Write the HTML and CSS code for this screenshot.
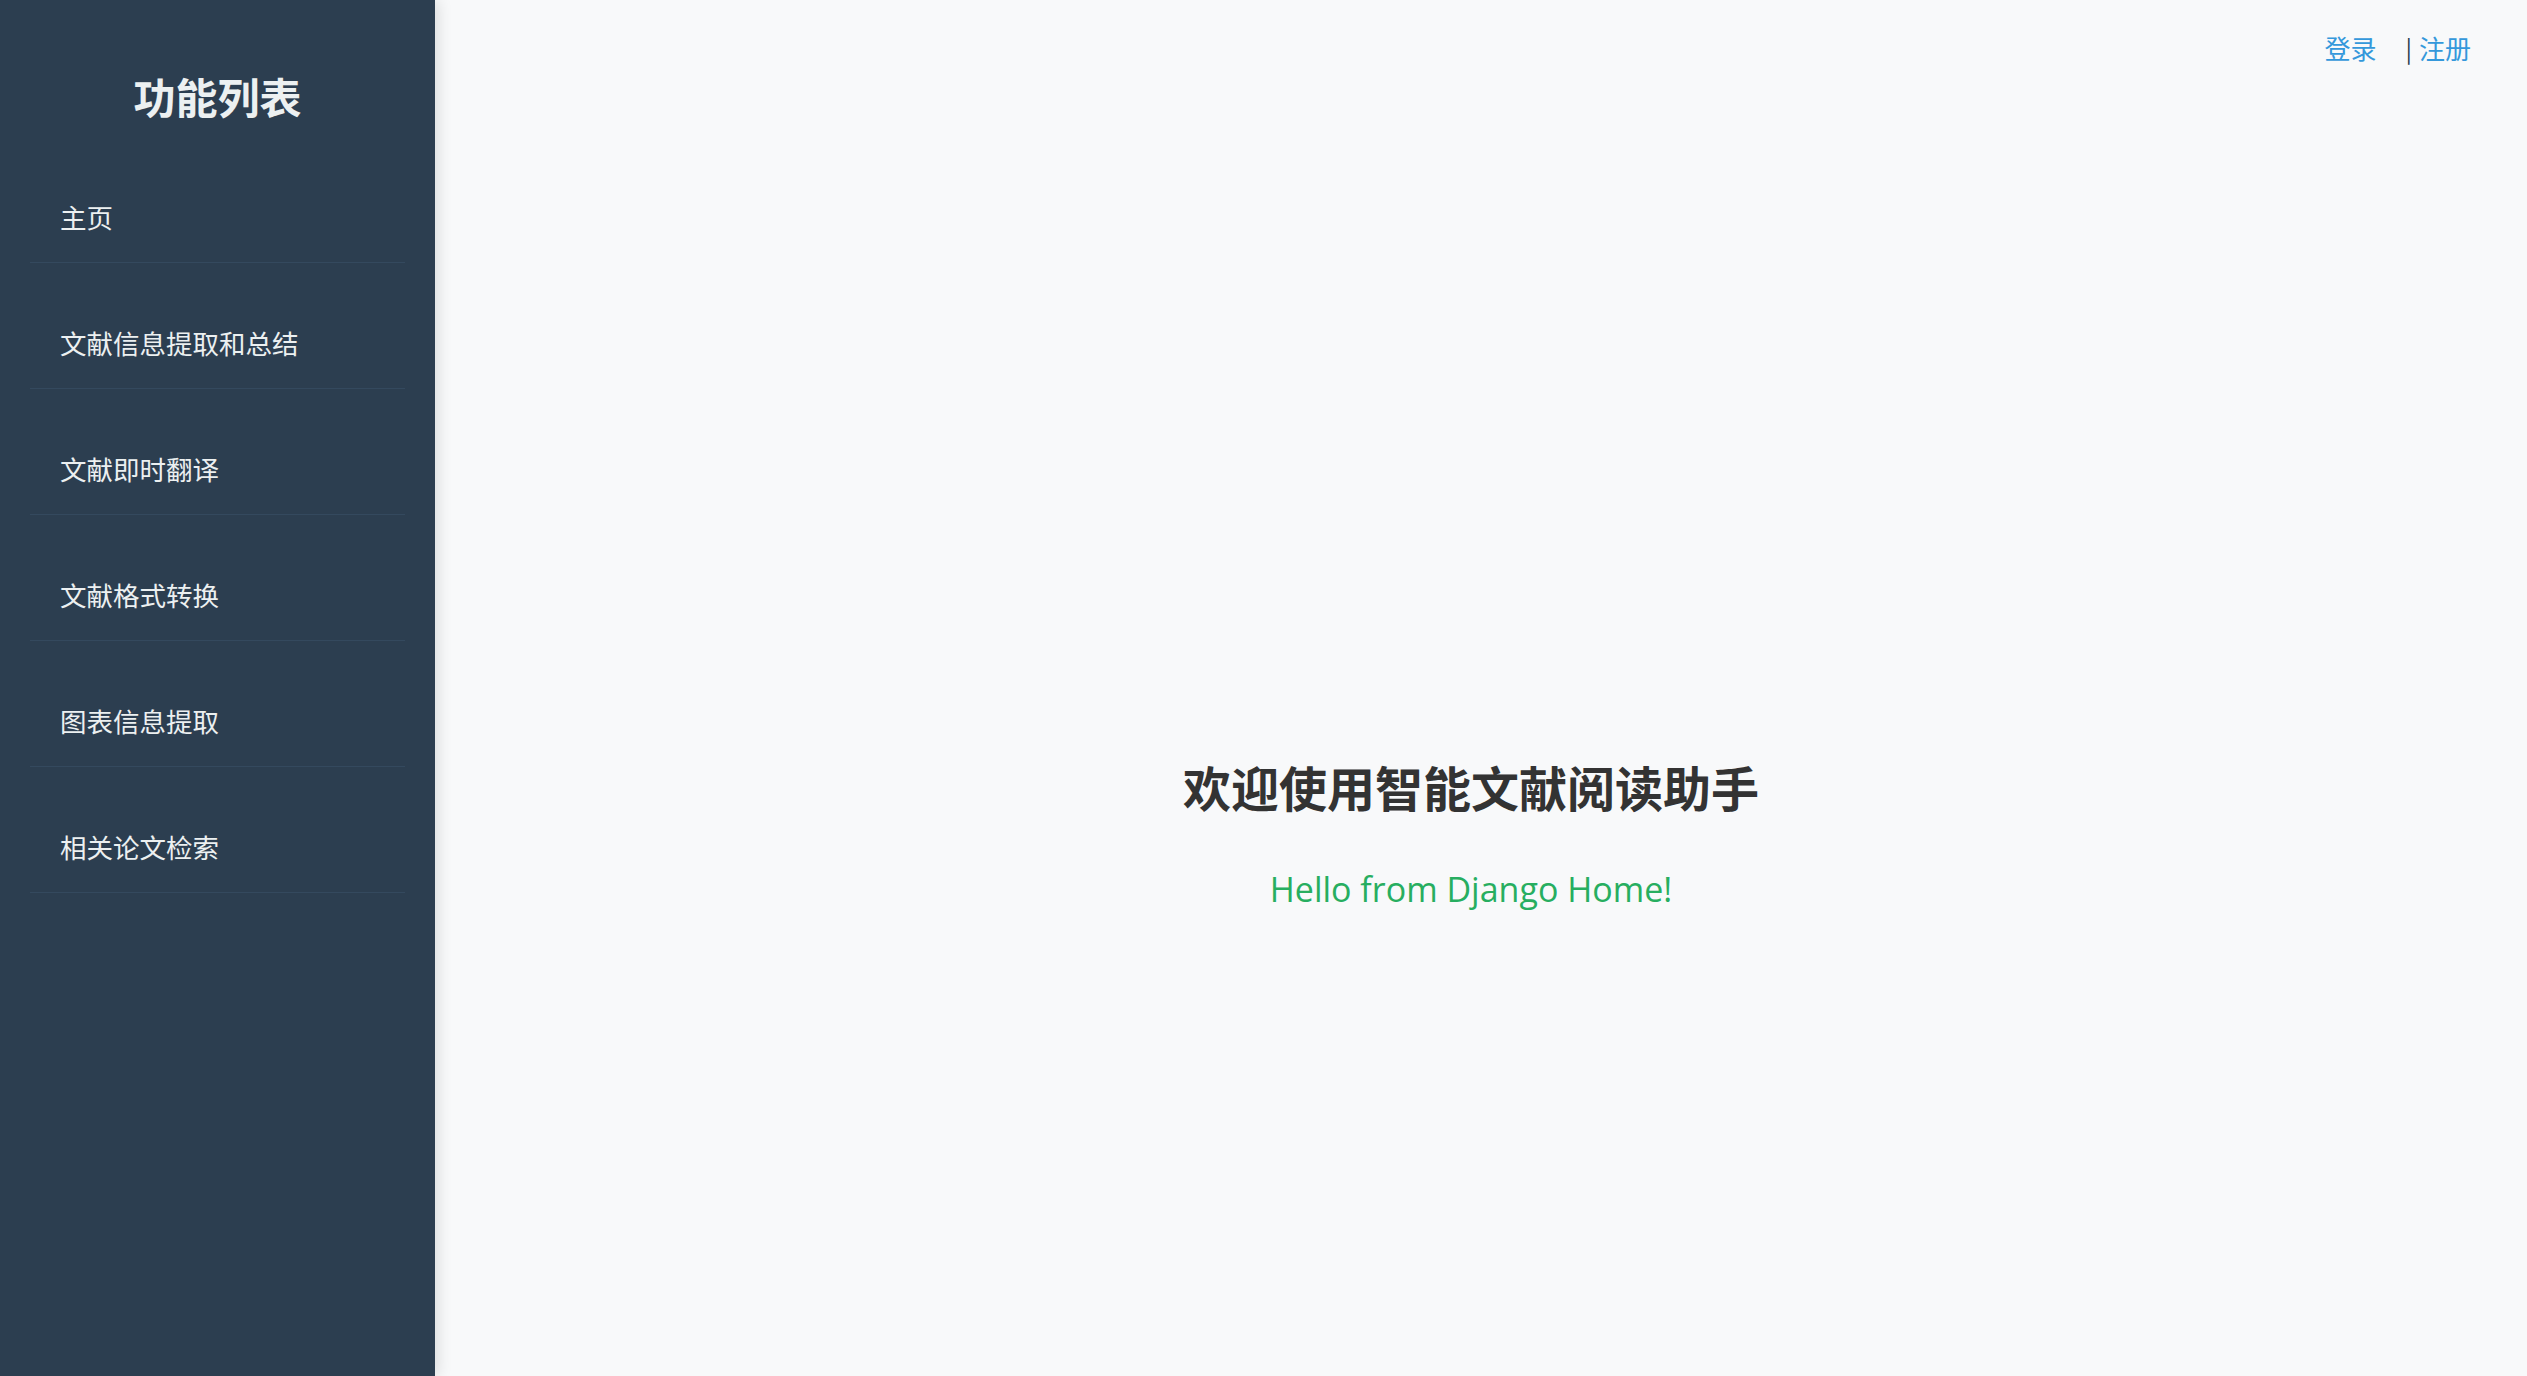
FILE: index.html
```html
<!DOCTYPE html>
<html lang="zh-CN">
<head>
<meta charset="utf-8">
<title>智能文献阅读助手</title>
<link rel="stylesheet" href="styles.css">
</head>
<body>
  <aside class="sidebar">
    <h2 class="sidebar-title">功能列表</h2>
    <ul class="menu">
      <li class="menu-item"><a href="#">主页</a></li>
      <li class="menu-item"><a href="#">文献信息提取和总结</a></li>
      <li class="menu-item"><a href="#">文献即时翻译</a></li>
      <li class="menu-item"><a href="#">文献格式转换</a></li>
      <li class="menu-item"><a href="#">图表信息提取</a></li>
      <li class="menu-item"><a href="#">相关论文检索</a></li>
    </ul>
  </aside>
  <main class="main">
    <header class="auth">
      <a class="auth-link" href="#">登录</a>
      <span class="auth-sep">|</span>
      <a class="auth-link" href="#">注册</a>
    </header>
    <section class="content">
      <h1 class="welcome">欢迎使用智能文献阅读助手</h1>
      <p class="hello">Hello from Django Home!</p>
    </section>
  </main>
</body>
</html>
```

FILE: styles.css
```css
html, body {
  margin: 0;
  padding: 0;
  height: 100%;
}

body {
  display: flex;
  min-height: 100vh;
  background: #f8f9fa;
  font-family: "Noto Sans CJK SC", "Noto Sans", sans-serif;
  color: #333;
}

.sidebar {
  position: relative;
  z-index: 1;
  width: 435px;
  flex: 0 0 435px;
  min-height: 100vh;
  background: #2c3e50;
  box-shadow: 3px 0 14px rgba(0, 0, 0, 0.12);
  padding-top: 71px;
  box-sizing: border-box;
}

.sidebar-title {
  margin: 0 0 50px;
  text-align: center;
  font-size: 42px;
  line-height: 50px;
  font-weight: 700;
  color: #ecf0f1;
}

.menu {
  list-style: none;
  margin: 0 30px;
  padding: 0;
  display: flex;
  flex-direction: column;
  gap: 34px;
}

.menu-item {
  padding: 26px 0 26px 30px;
  border-bottom: 1px solid #34495e;
}

.menu-item a {
  display: block;
  font-size: 26.5px;
  line-height: 39px;
  color: #ecf0f1;
  text-decoration: none;
}

.main {
  flex: 1;
  display: flex;
  flex-direction: column;
  min-height: 100vh;
}

.auth {
  display: flex;
  justify-content: flex-end;
  align-items: center;
  padding: 28px 56px 0 0;
  font-size: 26px;
  line-height: 39px;
}

.auth-link {
  color: #3498db;
  text-decoration: none;
}

.auth-sep {
  margin: 0 7px 0 29px;
  color: #2c3e50;
  font-size: 24px;
}

.content {
  flex: 1;
  display: flex;
  flex-direction: column;
  align-items: center;
  justify-content: center;
  padding: 224px 20px 0 0;
}

.welcome {
  margin: 0;
  font-size: 48px;
  line-height: 58px;
  font-weight: 700;
  color: #333;
}

.hello {
  margin: 53px 0 0;
  font-family: "Open Sans", "Noto Sans", sans-serif;
  font-size: 34px;
  line-height: 43px;
  color: #27ae60;
}
```
